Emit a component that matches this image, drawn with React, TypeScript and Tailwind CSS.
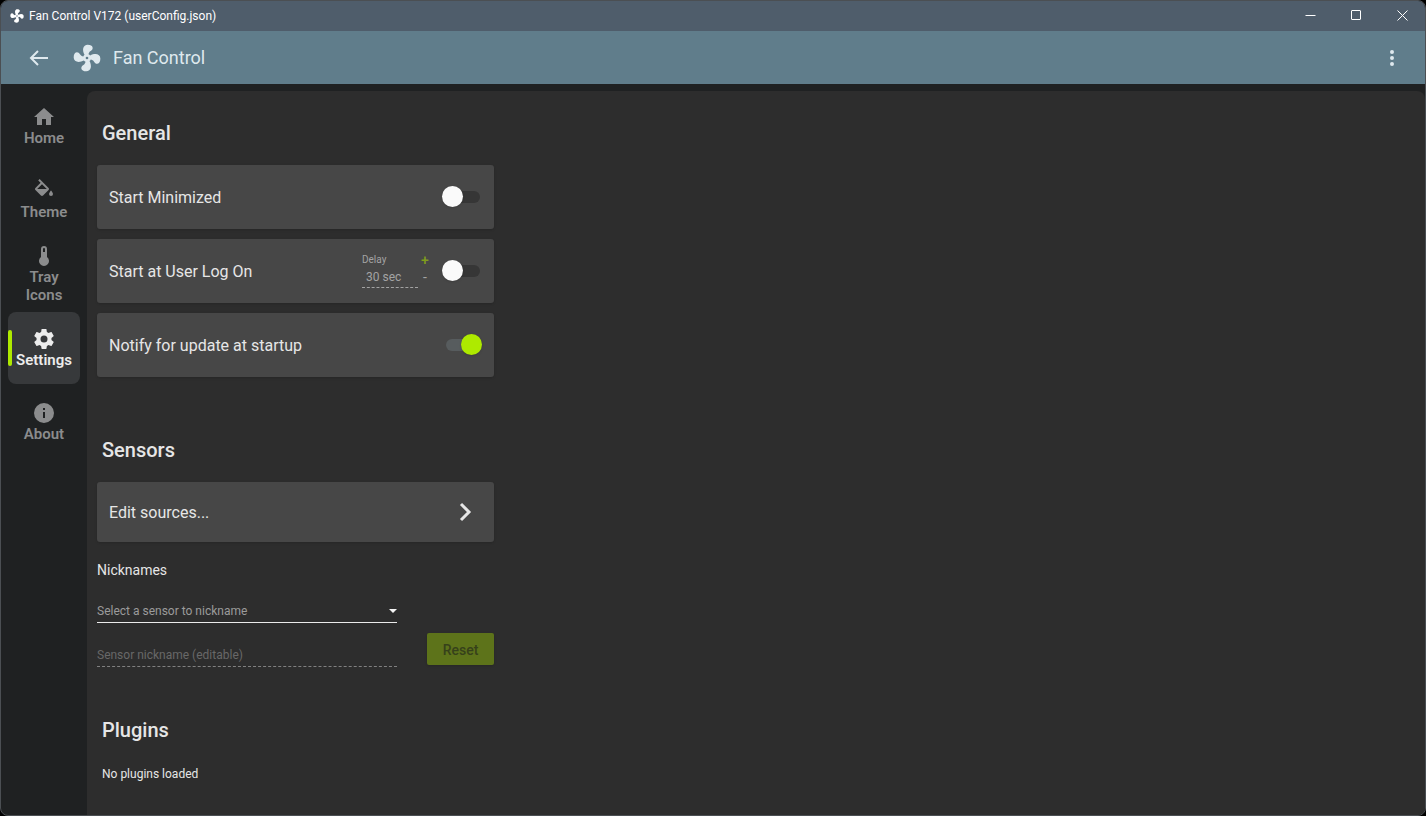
import { useState } from "react";

const icons = {
  fan: "M12,11A1,1 0 0,0 11,12A1,1 0 0,0 12,13A1,1 0 0,0 13,12A1,1 0 0,0 12,11M12.5,2C17,2 17.11,5.57 14.75,6.75C13.76,7.24 13.32,8.29 13.13,9.22C13.61,9.42 14.03,9.73 14.35,10.13C18.05,8.13 22.03,8.92 22.03,12.5C22.03,17 18.46,17.1 17.28,14.73C16.78,13.74 15.72,13.3 14.79,13.11C14.59,13.59 14.28,14 13.88,14.34C15.87,18.03 15.08,22 11.5,22C7,22 6.91,18.42 9.27,17.24C10.25,16.75 10.69,15.71 10.89,14.79C10.4,14.59 9.97,14.27 9.65,13.87C5.96,15.85 2,15.07 2,11.5C2,7 5.56,6.89 6.74,9.26C7.24,10.25 8.29,10.68 9.22,10.87C9.41,10.39 9.73,9.97 10.14,9.65C8.15,5.96 8.94,2 12.5,2Z",
  home: "M10,20V14H14V20H19V12H22L12,3L2,12H5V20H10Z",
  fill: "M19,11.5C19,11.5 17,13.67 17,15A2,2 0 0,0 19,17A2,2 0 0,0 21,15C21,13.67 19,11.5 19,11.5M5.21,10L10,5.21L14.79,10M16.56,8.94L7.62,0L6.21,1.41L8.59,3.79L3.44,8.94C2.85,9.5 2.85,10.47 3.44,11.06L8.94,16.56C9.23,16.85 9.62,17 10,17C10.38,17 10.77,16.85 11.06,16.56L16.56,11.06C17.15,10.47 17.15,9.5 16.56,8.94Z",
  thermometer: "M15 13V5A3 3 0 0 0 9 5V13A5 5 0 1 0 15 13M12 4A1 1 0 0 1 13 5V8H11V5A1 1 0 0 1 12 4Z",
  cog: "M12,15.5A3.5,3.5 0 0,1 8.5,12A3.5,3.5 0 0,1 12,8.5A3.5,3.5 0 0,1 15.5,12A3.5,3.5 0 0,1 12,15.5M19.43,12.97C19.47,12.65 19.5,12.33 19.5,12C19.5,11.67 19.47,11.34 19.43,11L21.54,9.37C21.73,9.22 21.78,8.95 21.66,8.73L19.66,5.27C19.54,5.05 19.27,4.96 19.05,5.05L16.56,6.05C16.04,5.66 15.5,5.32 14.87,5.07L14.5,2.42C14.46,2.18 14.25,2 14,2H10C9.75,2 9.54,2.18 9.5,2.42L9.13,5.07C8.5,5.32 7.96,5.66 7.44,6.05L4.95,5.05C4.73,4.96 4.46,5.05 4.34,5.27L2.34,8.73C2.21,8.95 2.27,9.22 2.46,9.37L4.57,11C4.53,11.34 4.5,11.67 4.5,12C4.5,12.33 4.53,12.65 4.57,12.97L2.46,14.63C2.27,14.78 2.21,15.05 2.34,15.27L4.34,18.73C4.46,18.95 4.73,19.03 4.95,18.95L7.44,17.94C7.96,18.34 8.5,18.68 9.13,18.93L9.5,21.58C9.54,21.82 9.75,22 10,22H14C14.25,22 14.46,21.82 14.5,21.58L14.87,18.93C15.5,18.67 16.04,18.34 16.56,17.94L19.05,18.95C19.27,19.03 19.54,18.95 19.66,18.73L21.66,15.27C21.78,15.05 21.73,14.78 21.54,14.63L19.43,12.97Z",
  info: "M13,9H11V7H13M13,17H11V11H13M12,2A10,10 0 0,0 2,12A10,10 0 0,0 12,22A10,10 0 0,0 22,12A10,10 0 0,0 12,2Z",
  dots: "M12,16A2,2 0 0,1 14,18A2,2 0 0,1 12,20A2,2 0 0,1 10,18A2,2 0 0,1 12,16M12,10A2,2 0 0,1 14,12A2,2 0 0,1 12,14A2,2 0 0,1 10,12A2,2 0 0,1 12,10M12,4A2,2 0 0,1 14,6A2,2 0 0,1 12,8A2,2 0 0,1 10,6A2,2 0 0,1 12,4Z",
};

function Icon({ name, className }: { name: keyof typeof icons; className?: string }) {
  return (
    <svg viewBox="0 0 24 24" fill="currentColor" className={className} aria-hidden="true">
      <path d={icons[name]} />
    </svg>
  );
}

const navItems: { label: string; icon: keyof typeof icons }[] = [
  { label: "Home", icon: "home" },
  { label: "Theme", icon: "fill" },
  { label: "Tray Icons", icon: "thermometer" },
  { label: "Settings", icon: "cog" },
  { label: "About", icon: "info" },
];

function TitleBar() {
  return (
    <div className="flex h-[30px] items-center bg-[#4f5d6b] text-white">
      <Icon name="fan" className="ml-2 size-4" />
      <span className="ml-1 text-xs">Fan Control V172 (userConfig.json)</span>
      <div className="ml-auto flex h-full pb-[2px]">
        <button aria-label="Minimize" className="flex w-[46px] items-center justify-center">
          <svg className="size-[11px]" viewBox="0 0 11 11" stroke="currentColor"><path d="M0.5 5.5H10.5" /></svg>
        </button>
        <button aria-label="Maximize" className="flex w-[46px] items-center justify-center">
          <svg className="size-[11px]" viewBox="0 0 11 11" fill="none" stroke="currentColor"><rect x="0.5" y="0.5" width="9" height="9" rx="0.5" /></svg>
        </button>
        <button aria-label="Close" className="flex w-[46px] items-center justify-center">
          <svg className="size-[11px]" viewBox="0 0 11 11" stroke="currentColor"><path d="M0.5 0.5L10.5 10.5M10.5 0.5L0.5 10.5" /></svg>
        </button>
      </div>
    </div>
  );
}

function AppBar() {
  return (
    <header className="flex h-[53px] items-center bg-[#607d8b] text-[#dfe9ee]">
      <button aria-label="Back" className="ml-7">
        <svg className="size-5" viewBox="0 0 20 20" fill="none" stroke="currentColor" strokeWidth="2"><path d="M19 10H2M9 3L2 10L9 17" /></svg>
      </button>
      <Icon name="fan" className="ml-[22px] size-8" />
      <h1 className="ml-[10px] text-lg">Fan Control</h1>
      <button aria-label="Menu" className="mr-[21px] ml-auto">
        <Icon name="dots" className="size-6" />
      </button>
    </header>
  );
}

function Toggle({ id, defaultChecked }: { id: string; defaultChecked?: boolean }) {
  return (
    <input
      id={id}
      type="checkbox"
      role="switch"
      defaultChecked={defaultChecked}
      className="relative h-3 w-[34px] shrink-0 appearance-none rounded-full bg-[#363636] before:absolute before:-top-[5px] before:-left-1 before:size-[21px] before:rounded-full before:bg-[#fafafa] before:shadow checked:bg-[#575c5e] checked:before:left-[15px] checked:before:bg-[#aeea00]"
    />
  );
}

export default function App() {
  const [active, setActive] = useState("Settings");
  const [delay, setDelay] = useState(30);

  return (
    <div className="flex min-h-screen bg-black font-[Roboto,sans-serif]">
      <div className="flex flex-1 flex-col overflow-hidden rounded-lg border border-[#4b4f53] bg-[#1f2122]">
        <TitleBar />
        <AppBar />
        <div className="flex flex-1">
          <nav className="flex w-[86px] shrink-0 flex-col items-center gap-[2px] pt-[6px]">
            {navItems.map((item) => (
              <button
                key={item.label}
                onClick={() => setActive(item.label)}
                className={`relative flex size-[72px] flex-col items-center justify-center rounded-lg text-[15px] leading-[18px] font-semibold ${
                  active === item.label ? "bg-[#37393b] text-[#ececec]" : "text-[#8b8c8d]"
                }`}
              >
                {active === item.label && <span className="absolute top-[18px] left-0 h-9 w-1 rounded-xs bg-[#aeea00]" />}
                <Icon name={item.icon} className="size-6 shrink-0" />
                <span className="w-14 text-center">{item.label}</span>
              </button>
            ))}
          </nav>

          <main className="mt-[7px] flex-1 rounded-t-lg bg-[#2d2d2d] px-[10px] pt-7 pb-5 text-[#e6e6e6]">
            <section>
              <h2 className="pl-[5px] text-xl leading-7 font-medium">General</h2>
              <div className="mt-[18px] flex max-w-[397px] flex-col gap-[10px]">
                <div className="flex h-16 items-center rounded-[3px] bg-[#474747] pr-[14px] pl-3 shadow">
                  <label htmlFor="minimized" className="flex-1 pt-[2px]">Start Minimized</label>
                  <Toggle id="minimized" />
                </div>
                <div className="flex h-16 items-center rounded-[3px] bg-[#474747] pr-[14px] pl-3 shadow">
                  <label htmlFor="logon" className="flex-1 pt-[2px]">Start at User Log On</label>
                  <div className="flex w-14 flex-col text-[#a3a3a3]">
                    <label htmlFor="delay" className="text-[10px] leading-3">Delay</label>
                    <input
                      id="delay"
                      readOnly
                      value={`${delay} sec`}
                      className="h-[22px] w-full border-b border-dashed border-[#a3a3a3] bg-transparent pl-1 text-xs outline-none"
                    />
                  </div>
                  <div className="mr-[15px] ml-px flex w-3 flex-col items-center pb-1 text-sm leading-[17px]">
                    <button aria-label="Increase delay" onClick={() => setDelay(delay + 1)} className="font-medium text-[#7f9c1c]">+</button>
                    <button aria-label="Decrease delay" onClick={() => setDelay(Math.max(0, delay - 1))} className="text-[#a3a3a3]">-</button>
                  </div>
                  <Toggle id="logon" />
                </div>
                <div className="flex h-16 items-center rounded-[3px] bg-[#474747] pr-[14px] pl-3 shadow">
                  <label htmlFor="notify" className="flex-1 pt-[2px]">Notify for update at startup</label>
                  <Toggle id="notify" defaultChecked />
                </div>
              </div>
            </section>

            <section className="mt-[59px] max-w-[397px]">
              <h2 className="pl-[5px] text-xl leading-7 font-medium">Sensors</h2>
              <button className="mt-[18px] flex h-15 w-full items-center justify-between rounded-[3px] bg-[#474747] pr-[22px] pl-3 shadow">
                <span className="pt-[2px]">Edit sources...</span>
                <svg className="h-5 w-[14px]" viewBox="0 0 14 20" fill="none" stroke="currentColor" strokeWidth="3"><path d="M3 2L11 10L3 18" /></svg>
              </button>
              <h3 className="mt-[18px] text-sm leading-5">Nicknames</h3>
              <div className="mt-[19px] flex items-end justify-between">
                <div className="flex w-[300px] flex-col gap-5 text-xs">
                  <div className="relative">
                    <select aria-label="Select a sensor to nickname" className="h-6 w-full appearance-none border-b border-[#ebebeb] bg-transparent text-[#9b9b9b] outline-none">
                      <option>Select a sensor to nickname</option>
                    </select>
                    <svg className="pointer-events-none absolute top-[10px] right-0 h-1 w-2" viewBox="0 0 8 4" fill="#f5f5f5"><path d="M0 0H8L4 4Z" /></svg>
                  </div>
                  <input
                    aria-label="Sensor nickname"
                    placeholder="Sensor nickname (editable)"
                    disabled
                    className="h-6 w-full border-b border-dashed border-[#808080] bg-transparent placeholder:text-[#686868]"
                  />
                </div>
                <button disabled className="mb-[2px] h-8 w-[67px] rounded-xs bg-[#5d731a] pt-[2px] text-sm font-medium text-[#36411a] shadow">Reset</button>
              </div>
            </section>

            <section className="mt-12 pl-[5px] pt-px">
              <h2 className="text-xl leading-7 font-medium">Plugins</h2>
              <p className="mt-5 text-xs leading-5">No plugins loaded</p>
            </section>
          </main>
        </div>
      </div>
    </div>
  );
}
